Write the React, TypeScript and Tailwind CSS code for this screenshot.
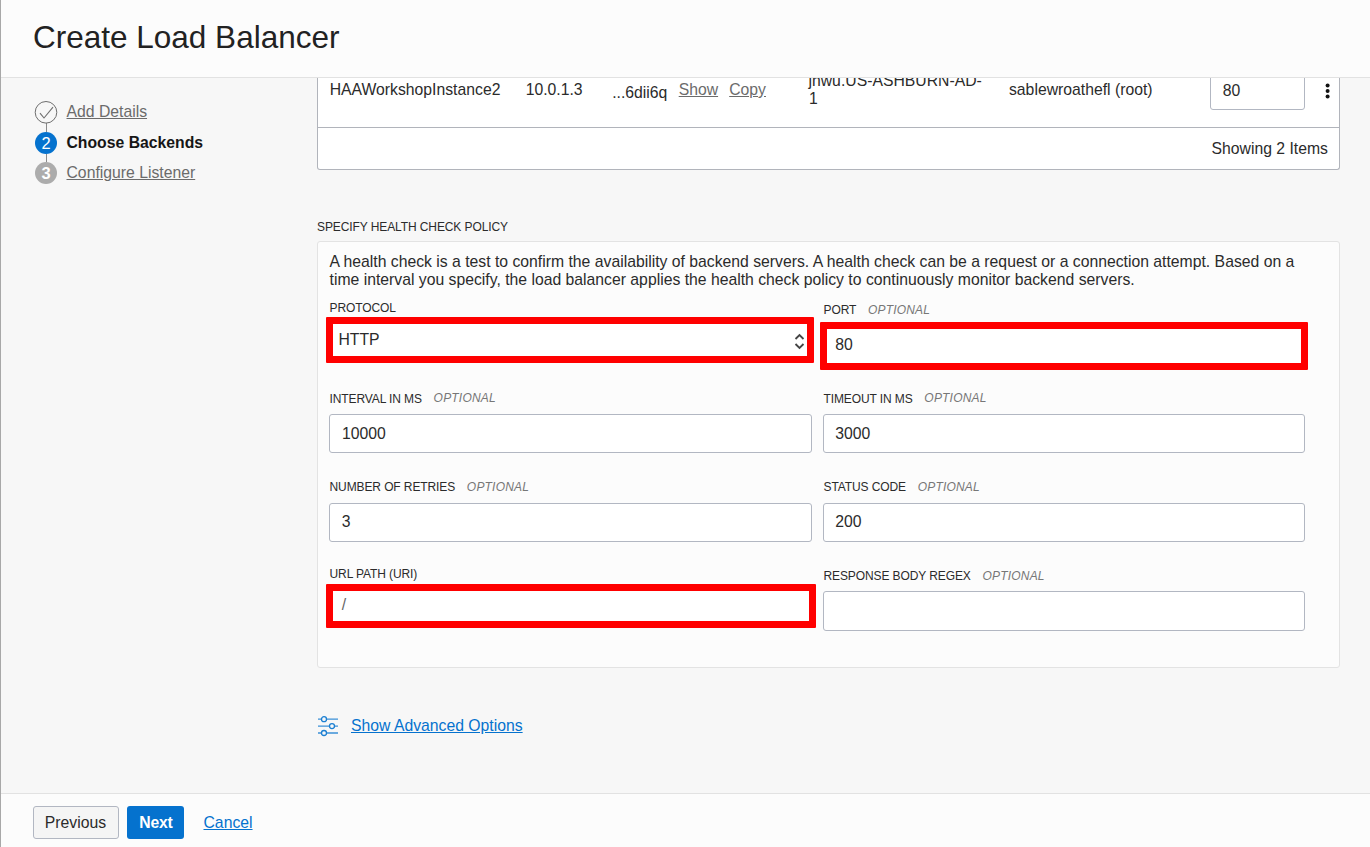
import type { ReactNode } from "react";

type StepState = "done" | "current" | "todo";

function Label({ text, optional, className, raised }: { text: string; optional?: boolean; className: string; raised?: boolean }) {
  return (
    <div className={`flex h-[14px] items-start pl-[0.5px] text-[12px] leading-[14px] tracking-[-0.1px] whitespace-nowrap text-[#2b2b2b] ${className}`}>
      <span>{text}</span>
      {optional && <span className={`ml-[11.7px] tracking-[0.2px] text-[#777] italic ${raised ? "-mt-px" : ""}`}>OPTIONAL</span>}
    </div>
  );
}

function Field({ children, className }: { children?: ReactNode; className: string }) {
  return <div className={`flex items-start rounded-[3px] border border-[#b2b7c2] bg-white ${className}`}>{children}</div>;
}

function Highlight({ children, className }: { children: ReactNode; className: string }) {
  return <div className={`flex items-start rounded-[1px] border-7 border-[#ff0000] bg-white ${className}`}>{children}</div>;
}

function Step({ state, n, label }: { state: StepState; n: number; label: string }) {
  return (
    <div className="flex h-[22px] items-start">
      {state === "done" ? (
        <svg width="24" height="24" viewBox="0 0 24 24" className="-mt-px -ml-px shrink-0" fill="none" stroke="#6e6e6e">
          <circle cx="12" cy="12.3" r="10.8" strokeWidth="1" />
          <path d="M6 13.2 L10 18 L19 7.2" strokeWidth="1.1" />
        </svg>
      ) : (
        <div
          className={`flex size-[22px] shrink-0 items-center justify-center rounded-full text-[16.5px] leading-[18px] text-white ${
            state === "current" ? "bg-[#0572ce]" : "bg-[#acacac] font-bold"
          }`}
        >
          {n}
        </div>
      )}
      <span
        className={`mt-[2px] whitespace-nowrap ${state === "done" ? "ml-[8.5px]" : "ml-[9.5px]"} ${
          state === "current" ? "font-bold text-[#161616]" : "text-[#6b6b6b] underline"
        }`}
      >
        {label}
      </span>
    </div>
  );
}

export default function App() {
  return (
    <div className="flex h-[847px] w-[1370px] flex-col overflow-hidden border-l border-[#a8a8a8] bg-[#f7f7f7] font-['Liberation_Sans',Arial,sans-serif] text-[15.75px] leading-[18px] text-[#2b2b2b]">
      <header className="h-[78px] shrink-0 border-b border-[#e2e2e2] bg-[#fcfcfc] pt-5 pl-8">
        <h1 className="text-[31.5px] leading-[35px] text-[#222]">Create Load Balancer</h1>
      </header>

      <main className="flex h-[715px] shrink-0 overflow-hidden">
        <nav className="w-[316px] shrink-0 pt-[23px] pl-[34px]">
          <Step state="done" n={1} label="Add Details" />
          <div className="ml-[11px] h-[9px] w-px bg-[#8a8a8a]" />
          <Step state="current" n={2} label="Choose Backends" />
          <div className="ml-[11px] h-2 w-px bg-[#8a8a8a]" />
          <Step state="todo" n={3} label="Configure Listener" />
        </nav>

        <div className="w-[1023px] shrink-0">
          <section className="h-[92px] rounded-b-[3px] border-x border-b border-[#b1b4bb] bg-white">
            <div className="flex h-[50px] items-start border-b border-[#b1b4bb] pl-[11.7px] whitespace-nowrap">
              <span className="w-[196px] pt-[3px]">HAAWorkshopInstance2</span>
              <span className="w-[86.5px] pt-[3px]">10.0.1.3</span>
              <span className="w-[66.5px] pt-[6px]">...6dii6q</span>
              <span className="w-[50.5px] pt-[3px] text-[#6b6b6b] underline">Show</span>
              <span className="w-[79.3px] pt-[3px] text-[#6b6b6b] underline">Copy</span>
              <span className="-mt-[6px] w-[200.5px]">
                jhwu.US-ASHBURN-AD-
                <br />
                <span className="ml-[0.5px]">1</span>
              </span>
              <span className="w-[201px] pt-[3px]">sablewroathefl (root)</span>
              <div className="-mt-[6px] h-[38px] w-[95px] rounded-[3px] border border-[#b2b7c2] pt-[9px] pl-[11.7px]">80</div>
              <svg width="6" height="18" viewBox="0 0 6 18" className="mt-1 ml-[20px]" fill="#111">
                <circle cx="2.6" cy="3.5" r="2" />
                <circle cx="2.6" cy="9" r="2" />
                <circle cx="2.6" cy="14.5" r="2" />
              </svg>
            </div>
            <div className="pt-3 pr-[11px] text-right">Showing 2 Items</div>
          </section>

          <h2 className="mt-[50px] h-[14px] text-[12px] leading-[14px] tracking-[-0.1px]">SPECIFY HEALTH CHECK POLICY</h2>

          <section className="mt-[7px] h-[427px] rounded-[3px] border border-[#e3e3e3] bg-[#fcfcfc] pt-[11px] pl-[11px]">
            <p className="pl-[0.5px] whitespace-nowrap">
              A health check is a test to confirm the availability of backend servers. A health check can be a request or a connection attempt. Based on a
              <br />
              time interval you specify, the load balancer applies the health check policy to continuously monitor backend servers.
            </p>
            <div className="flex gap-[11px]">
              <div className="flex w-[483px] flex-col">
                <Label text="PROTOCOL" className="mt-3" />
                <Highlight className="mt-[2px] -mr-[2px] -ml-[3px] h-[46px] justify-between pt-[7px] pr-[2px] pl-[5.4px]">
                  <span>HTTP</span>
                  <svg width="11" height="18" viewBox="0 0 11 18" className="mt-px" fill="none" stroke="#444" strokeWidth="1.8">
                    <path d="M1.5 7 L5.5 3 L9.5 7" />
                    <path d="M1.5 12 L5.5 16 L9.5 12" />
                  </svg>
                </Highlight>
                <Label text="INTERVAL IN MS" optional raised className="mt-[29px]" />
                <Field className="mt-2 h-[39px] pt-[10px] pl-[12px]">10000</Field>
                <Label text="NUMBER OF RETRIES" optional className="mt-[27px]" />
                <Field className="mt-[9px] h-[39px] pt-[9px] pl-[11.7px]">3</Field>
                <Label text="URL PATH (URI)" className="mt-[25px]" />
                <Highlight className="mt-[3px] -mr-[4px] -ml-[3px] h-[44px] pt-[5px] pl-[8.7px] text-[#666]">/</Highlight>
              </div>
              <div className="flex w-[482px] flex-col">
                <Label text="PORT" optional className="mt-[14px]" />
                <Highlight className="mt-[5px] -mr-[3px] -ml-[3px] h-[48px] pt-[7px] pl-[8.3px]">80</Highlight>
                <Label text="TIMEOUT IN MS" optional raised className="mt-[22px]" />
                <Field className="mt-2 h-[39px] pt-[10px] pl-[11.3px]">3000</Field>
                <Label text="STATUS CODE" optional className="mt-[27px]" />
                <Field className="mt-[9px] h-[39px] pt-[9px] pl-[11.3px]">200</Field>
                <Label text="RESPONSE BODY REGEX" optional className="mt-[27px]" />
                <Field className="mt-2 h-[40px]" />
              </div>
            </div>
          </section>

          <div className="mt-[48px] flex items-start">
            <svg width="22" height="22" viewBox="0 0 22 22" className="ml-px" fill="none" stroke="#1b7fd2" strokeWidth="1.3">
              <path d="M0 3.2H3.4M8.6 3.2H20M0 10.1H11.4M16.6 10.1H20M0 17H3.4M8.6 17H20" strokeOpacity="0.85" />
              <circle cx="6" cy="3.2" r="2.5" />
              <circle cx="14" cy="10.1" r="2.5" />
              <circle cx="6" cy="17" r="2.5" />
            </svg>
            <a className="mt-px ml-[11px] text-[#0572ce] underline">Show Advanced Options</a>
          </div>
        </div>
      </main>

      <footer className="flex h-[54px] shrink-0 items-start border-t border-[#e2e2e2] bg-[#fcfcfc] pt-3 pl-8">
        <button className="h-[33px] w-[86px] rounded-[3px] border border-[#b2b7c2] bg-[#f5f5f5] pr-px">Previous</button>
        <button className="ml-2 h-[33px] w-[57px] rounded-[3px] bg-[#0572ce] pl-px font-bold tracking-[-0.2px] text-white">Next</button>
        <a className="mt-2 ml-[19.5px] text-[#0572ce] underline">Cancel</a>
      </footer>
    </div>
  );
}
